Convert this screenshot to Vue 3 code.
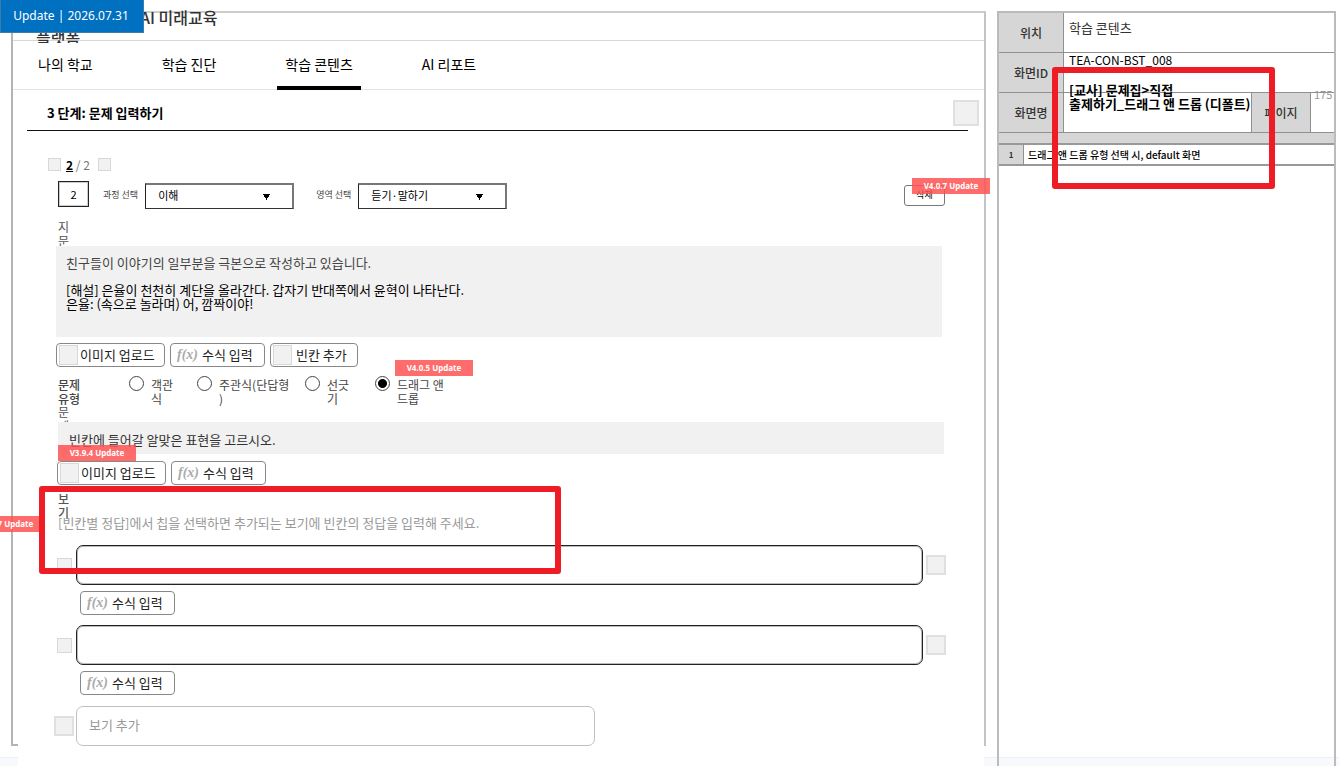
<script setup>
import { ref } from 'vue'

const tabs = ['나의 학교', '학습 진단', '학습 콘텐츠', 'AI 리포트']
const active = ref('학습 콘텐츠')
const types = [
  { label: '객관식', cls: 'w-a' },
  { label: '주관식(단답형)', cls: 'w-b' },
  { label: '선긋기', cls: 'w-c' },
  { label: '드래그 앤 드롭', cls: 'w-d' }
]
const type = ref('드래그 앤 드롭')
const number = ref('2')
const course = ref('이해')
const area = ref('듣기·말하기')
const question = ref('빈칸에 들어갈 알맞은 표현을 고르시오.')
const answers = ref(['', ''])
</script>

<template>
  <div class="page">
    <div class="stamp">Update | 2026.07.31</div>

    <main class="frame">
      <header class="brand"><h1>AI 미래교육 플랫폼</h1></header>

      <nav class="tabs">
        <a v-for="t in tabs" :key="t" href="#" :class="{ on: t === active }" @click.prevent="active = t">{{ t }}</a>
      </nav>

      <div class="step">
        <h2>3 단계: 문제 입력하기</h2>
        <button class="ph ph-26" type="button" aria-label="닫기"></button>
      </div>

      <div class="pager">
        <button class="ph ph-13" type="button" aria-label="이전"></button>
        <p><b>2</b> / 2</p>
        <button class="ph ph-13" type="button" aria-label="다음"></button>
      </div>

      <div class="filters">
        <input v-model="number" class="num" aria-label="문제 번호" />
        <label for="course">과정 선택</label>
        <span class="select">
          <select id="course" v-model="course"><option>이해</option></select>
          <svg width="7" height="6" viewBox="0 0 7 6"><path d="M0 0H7V1H6V3H5V4H4V6H3V4H2V3H1V1H0Z" /></svg>
        </span>
        <label class="second" for="area">영역 선택</label>
        <span class="select">
          <select id="area" v-model="area"><option>듣기·말하기</option></select>
          <svg width="7" height="6" viewBox="0 0 7 6"><path d="M0 0H7V1H6V3H5V4H4V6H3V4H2V3H1V1H0Z" /></svg>
        </span>
        <span class="del-wrap">
          <button class="del" type="button">삭제</button>
          <span class="tag tag-del">V4.0.7 Update</span>
        </span>
      </div>

      <section class="passage">
        <h3 id="passage-label" class="vlabel">지문</h3>
        <div class="area" role="textbox" aria-multiline="true" aria-labelledby="passage-label" contenteditable="true">
          <p class="soft">친구들이 이야기의 일부분을 극본으로 작성하고 있습니다.</p>
          <p>[해설] 은율이 천천히 계단을 올라간다. 갑자기 반대쪽에서 윤혁이 나타난다.<br />은율: (속으로 놀라며) 어, 깜짝이야!</p>
        </div>
      </section>

      <div class="tools first">
        <button class="tool img" type="button"><i class="ph ph-19"></i>이미지 업로드</button>
        <button class="tool fx" type="button"><em>f(x)</em>수식 입력</button>
        <button class="tool blank" type="button"><i class="ph ph-19"></i>빈칸 추가</button>
      </div>

      <fieldset class="types">
        <legend class="sr">문제 유형</legend>
        <span class="tlabel" aria-hidden="true">문제 유형</span>
        <label v-for="t in types" :key="t.label" :class="t.cls">
          <input v-model="type" type="radio" name="type" :value="t.label" />
          <span>{{ t.label }}</span>
        </label>
        <span class="tag tag-type">V4.0.5 Update</span>
      </fieldset>

      <section class="question">
        <label class="vlabel" for="question">문제</label>
        <input id="question" v-model="question" />
        <span class="tag tag-q">V3.9.4 Update</span>
      </section>

      <div class="tools">
        <button class="tool img" type="button"><i class="ph ph-19"></i>이미지 업로드</button>
        <button class="tool fx" type="button"><em>f(x)</em>수식 입력</button>
      </div>

      <section class="choices">
        <h3 class="vlabel bold">보기</h3>
        <p class="hint">[빈칸별 정답]에서 칩을 선택하면 추가되는 보기에 빈칸의 정답을 입력해 주세요.</p>
        <template v-for="(a, i) in answers" :key="i">
          <div class="choice">
            <i class="ph ph-14"></i>
            <input v-model="answers[i]" :aria-label="'보기 ' + (i + 1)" />
            <button class="ph ph-20" type="button" aria-label="삭제"></button>
          </div>
          <button class="tool fx under" type="button"><em>f(x)</em>수식 입력</button>
        </template>
        <div class="choice add">
          <i class="ph ph-20"></i>
          <input placeholder="보기 추가" aria-label="보기 추가" />
        </div>
        <span class="tag tag-side">V4.0.7 Update</span>
        <div class="mark mark-choices"></div>
      </section>
    </main>

    <aside class="spec">
      <table class="meta">
        <colgroup><col class="c-th" /><col /><col class="c-page" /><col class="c-no" /></colgroup>
        <tbody>
          <tr><th>위치</th><td colspan="3" class="loc">학습 콘텐츠</td></tr>
          <tr><th>화면ID</th><td colspan="3" class="code">TEA-CON-<span>BST_008</span></td></tr>
          <tr>
            <th>화면명</th>
            <td class="name"><p>[교사] 문제집&gt;직접<br />출제하기_드래그 앤 드롭 (디폴트)</p></td>
            <th class="page-th">페이지</th>
            <td class="no"><span>175</span></td>
          </tr>
        </tbody>
      </table>
      <div class="band"></div>
      <table class="desc">
        <colgroup><col class="c-idx" /><col /></colgroup>
        <tbody><tr><th>1</th><td>드래그 앤 드롭 유형 선택 시, default 화면</td></tr></tbody>
      </table>
      <div class="mark mark-spec"></div>
    </aside>

    <footer class="foot"><span></span></footer>
  </div>
</template>

<style>
body { margin: 0; background: #fff; }
</style>

<style scoped>
* { box-sizing: border-box; }
.page {
  position: relative;
  display: grid;
  grid-template-columns: minmax(0, 1fr) 353px;
  grid-template-rows: auto 1fr;
  min-height: 100vh;
  overflow: hidden;
  font-family: "Noto Sans CJK KR", "Noto Sans", sans-serif;
  font-size: 13px;
  line-height: 14px;
  color: #000;
}
h1, h2, h3, p { margin: 0; font-size: inherit; font-weight: 400; }
button, input, select { font: inherit; color: inherit; margin: 0; padding: 0; background: #fff; border-radius: 0; outline: none; }
button { cursor: pointer; white-space: nowrap; }
.sr { position: absolute; width: 1px; height: 1px; overflow: hidden; clip-path: inset(50%); }

.stamp {
  position: absolute; z-index: 5; top: 0; left: 0;
  width: 144px; height: 33px; padding-right: 2px;
  border: 1px solid #3d7ba8; border-top-width: 0;
  background: #0070c0; color: #fff;
  font-family: "Noto Sans", sans-serif; font-size: 12px; line-height: 32px; text-align: center;
}

.frame {
  position: relative;
  margin: 11px 0 0 11px;
  border: 2px solid #b4b4b4; border-top: 2px solid #ccc; border-right-color: #c4c4c4; border-bottom: 0;
}
.frame::after { content: ""; display: block; width: 5px; height: 2px; background: #b4b4b4; margin-top: -2px; }
.brand { display: flow-root; height: 28px; border-bottom: 1px solid #d8d8d8; }
.brand h1 {
  width: 200px; height: 36px; margin: -6px 0 0 23px;
  overflow: hidden; text-indent: 104px; word-break: keep-all;
  font-size: 16px; line-height: 20px; font-weight: 500; color: #333;
}
.tabs { display: flex; gap: 53px; height: 49px; padding-left: 17px; border-bottom: 1px solid #e4e4e4; font-size: 14px; }
.tabs a { height: 49px; padding: 0 8px; line-height: 47px; color: #000; text-decoration: none; }
.tabs a.on { border-bottom: 4px solid #000; }

.step { position: relative; display: flex; align-items: center; justify-content: space-between; height: 41px; margin-left: 14px; padding: 5px 5px 0 20px; }
.step::after { content: ""; position: absolute; left: 0; right: 16px; bottom: 0; height: 1px; background: #111; }
.step h2 { font-weight: 700; }

.ph { display: block; flex: none; padding: 0; border: 2px solid #e0e0e0; background: #f1f1f1; }
.ph-13 { width: 13px; height: 13px; border-width: 1px; border-color: #d8d8d8; }
.ph-14 { width: 15px; height: 15px; border-width: 1px; border-color: #d8d8d8; }
.ph-19 { width: 19px; height: 20px; border-width: 1px; border-color: #d8d8d8; }
.ph-20 { width: 20px; height: 20px; }
.ph-26 { width: 26px; height: 26px; }

.pager { display: flex; align-items: center; margin: 26px 0 0 35px; height: 15px; font-size: 12px; color: #777; }
.pager p { width: 37px; padding-left: 5px; }
.pager b { color: #000; text-decoration: underline; }

.filters { display: flex; align-items: center; height: 28px; margin: 9px 39px 0 45px; font-size: 11px; }
.filters label { margin: 0 7px 0 14px; font-size: 9px; color: #444; white-space: nowrap; }
.filters label.second { margin-left: 22px; }
.num { width: 31px; height: 26px; border: 1px solid #222; text-align: center; box-shadow: 0 0 0 1px #ccc inset; align-self: flex-start; }
.select { position: relative; display: block; width: 149px; height: 26px; align-self: flex-end; }
.select select { appearance: none; width: 100%; height: 100%; padding: 0 0 3px 12px; border: 2px solid #777; border-left: 1px solid #222; border-bottom: 1px solid #333; }
.select svg { position: absolute; right: 24px; top: 11px; pointer-events: none; }
.del-wrap { position: relative; margin-left: auto; }
.del { display: block; width: 41px; height: 21px; border: 1px solid #777; border-radius: 3px; font-size: 9px; }

.tag {
  position: absolute; z-index: 2; width: 78px; height: 16px;
  background: rgba(255, 80, 80, .84); color: #fff;
  font-family: "Noto Sans", sans-serif; font-size: 8px; font-weight: 700; line-height: 16px; text-align: center; white-space: nowrap;
}
.tag-del { left: 8px; top: -7px; }
.tag-type { left: 337px; top: -16px; }
.tag-q { left: 0; top: 40px; }
.tag-side { left: -91px; top: 24px; }

.vlabel { width: 12px; font-size: 12px; line-height: 14px; color: #555; word-break: break-all; }
.vlabel.bold { font-weight: 500; }
.passage { margin: 11px 42px 0 43px; }
.passage .vlabel { height: 26px; margin-left: 2px; overflow: hidden; }
.area { min-height: 91px; padding: 10px; background: #f1f1f1; outline: none; }
.area p + p { margin-top: 13px; }
.soft { color: #444; }

.tools { display: flex; gap: 5px; margin: 7px 0 0 44px; }
.tools.first { margin: 6px 0 0 43px; }
.tool { display: flex; align-items: center; height: 24px; border: 1px solid #888; border-radius: 4px; color: #222; line-height: 20px; }
.tool .ph { margin: 0 2px; }
.tool.img { width: 109px; }
.tool.fx { width: 95px; padding-left: 6px; }
.tool.blank { width: 88px; }
.tool.blank .ph { margin-right: 4px; }
.tool em { margin-right: 4px; font-family: "Liberation Serif", serif; font-weight: 700; font-size: 14px; color: #aaa; }

.types { position: relative; display: flex; height: 30px; margin: 9px 0 0 45px; padding: 0; border: 0; min-width: 0; font-size: 12px; color: #444; }
.tlabel { width: 26px; margin: 2px 45px 0 0; font-weight: 500; }
.types label { display: flex; align-items: flex-start; word-break: break-all; line-break: anywhere; }
.types label span { margin: 2px 0 0 7px; flex: 1; }
.types input { appearance: none; flex: none; width: 15px; height: 15px; border: 1px solid #444; border-radius: 50%; background: #fff; }
.types input:checked { background: radial-gradient(circle, #000 0 4px, #fff 5px); }
.w-a { width: 48px; margin-right: 20px; }
.w-b { width: 94px; margin-right: 14px; }
.w-c { width: 47px; margin-right: 23px; }
.w-d { width: 76px; }

.question { position: relative; margin: -1px 40px 0 45px; }
.question .vlabel { display: block; height: 17px; overflow: hidden; }
.question input { display: block; width: 100%; height: 32px; padding: 2px 11px 0; border: 0; background: #f1f1f1; color: #333; }

.choices { position: relative; margin: 7px 38px 0 45px; }
.choices .vlabel { height: 28px; }
.hint { color: #999; margin-top: -4px; }
.choice { display: flex; align-items: center; gap: 3px; margin: 15px 0 0 -1px; }
.choice input { flex: 1; min-width: 0; height: 40px; border: 1px solid #222; border-radius: 7px; padding: 0 12px; box-shadow: 0 0 0 1px #bbb inset; }
.choice .ph-14 { margin-right: 1px; }
.under { margin: 6px 0 -5px 22px; }
.choice.add { margin: 16px 0 0 -4px; gap: 2px; }
.choice.add input { flex: 0 1 519px; padding-bottom: 3px; border-color: #c0c0c0; box-shadow: none; }
.choice.add input::placeholder { color: #999; opacity: 1; }

.mark { position: absolute; z-index: 3; border: 6px solid #ee1c25; border-radius: 3px; pointer-events: none; }
.mark-choices { left: -19px; top: -6px; width: 522px; height: 88px; }
.mark-spec { left: 53px; top: 54px; width: 223px; height: 122px; }

.spec { position: relative; grid-column: 2; grid-row: 1 / 3; margin: 11px 3px 0 11px; border: 2px solid #bbb; border-bottom: 0; z-index: 1; }
table { width: 100%; table-layout: fixed; border-spacing: 0; border-collapse: separate; }
th, td { padding: 0; font-weight: 400; border-bottom: 1px solid #909090; text-align: left; vertical-align: top; }
th { vertical-align: middle; text-align: center; background: #d6d6d6; border-right: 1px solid #909090; font-size: 12px; font-weight: 500; color: #333; }
.meta tr { height: 40px; }
.c-th { width: 65px; }
.c-page { width: 60px; }
.c-no { width: 23px; }
.c-idx { width: 25px; }
.loc { padding: 8px 5px; color: #333; }
.code { padding: 0 5px; font-size: 12px; }
.code span { text-decoration: underline wavy #e66 1px; text-underline-offset: 1px; }
.name, .no { position: relative; }
.name p { position: absolute; z-index: 1; left: 5px; top: -10px; font-weight: 700; white-space: nowrap; }
.page-th { border-left: 1px solid #909090; }
.no span { position: absolute; left: 3px; top: -6px; font-size: 11px; color: #999; }
.band { height: 10px; background: #d6d6d6; }
.desc th, .desc td { height: 23px; border-top: 2px solid #999; border-bottom: 2px solid #999; vertical-align: middle; }
.desc th { font-size: 8px; font-weight: 700; }
.desc td { padding-left: 4px; font-size: 10px; font-weight: 500; }

.foot { grid-column: 1 / 3; grid-row: 2; min-height: 9px; margin-top: 11px; border-top: 1px solid #f0f0f2; background: #f8f9fd; display: flex; }
.foot span { flex: 1; margin: -1px 355px 0 18px; background: #fff; }
</style>
